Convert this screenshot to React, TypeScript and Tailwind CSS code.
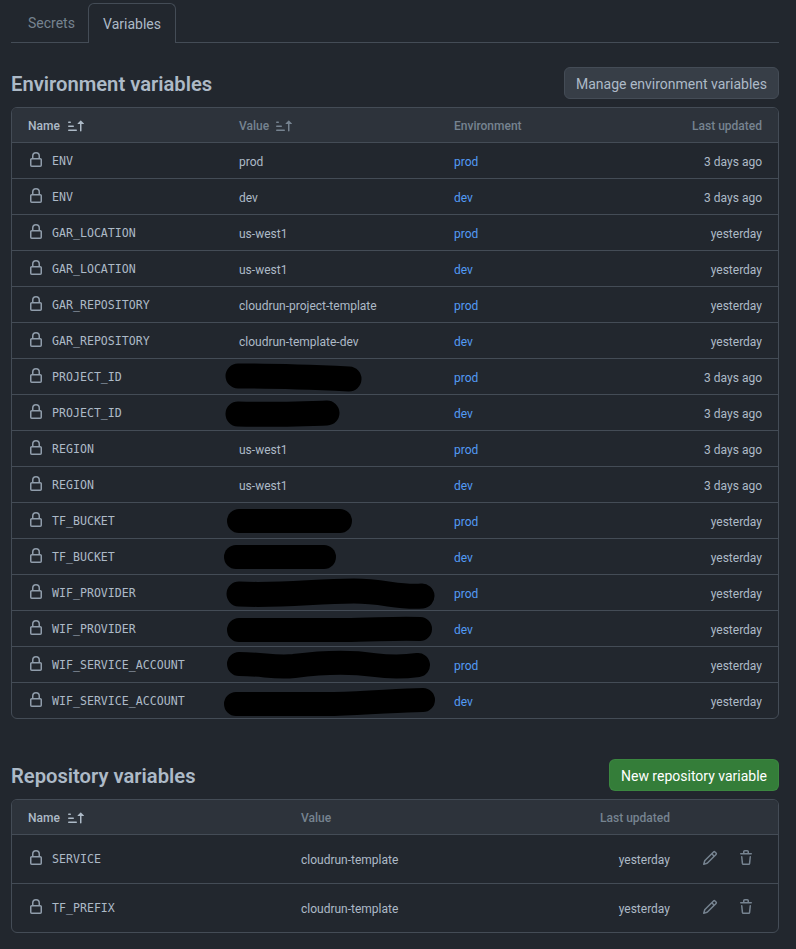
import React from "react";

const sans = "font-['Roboto',sans-serif]";

function Lock() {
  return (
    <svg viewBox="0 0 16 16" width="16" height="16" className="shrink-0 -translate-y-[1px] fill-[#909dab]">
      <path d="M4 4a4 4 0 0 1 8 0v2h.25c.966 0 1.75.784 1.75 1.75v5.5A1.75 1.75 0 0 1 12.25 15h-8.5A1.75 1.75 0 0 1 2 13.25v-5.5C2 6.784 2.784 6 3.75 6H4Zm8.25 3.5h-8.5a.25.25 0 0 0-.25.25v5.5c0 .138.112.25.25.25h8.5a.25.25 0 0 0 .25-.25v-5.5a.25.25 0 0 0-.25-.25ZM10.5 6V4a2.5 2.5 0 1 0-5 0v2Z" />
    </svg>
  );
}

function Sort({ dim }: { dim?: boolean }) {
  return (
    <svg viewBox="0 0 16 16" width="16" height="16" className={dim ? "fill-[#768390]" : "fill-[#adbac7]"}>
      <path d="m12.927 2.573 3 3A.25.25 0 0 1 15.75 6H13.5v6.75a.75.75 0 0 1-1.5 0V6H9.75a.25.25 0 0 1-.177-.427l3-3a.25.25 0 0 1 .354 0ZM0 12.25a.75.75 0 0 1 .75-.75h7.5a.75.75 0 0 1 0 1.5H.75a.75.75 0 0 1-.75-.75Zm0-4a.75.75 0 0 1 .75-.75h4.5a.75.75 0 0 1 0 1.5H.75A.75.75 0 0 1 0 8.25Zm0-4a.75.75 0 0 1 .75-.75h1.5a.75.75 0 0 1 0 1.5H.75A.75.75 0 0 1 0 4.25Z" />
    </svg>
  );
}

function Pencil() {
  return (
    <svg viewBox="0 0 16 16" width="16" height="16" className="fill-[#768390]">
      <path d="M11.013 1.427a1.75 1.75 0 0 1 2.474 0l1.086 1.086a1.75 1.75 0 0 1 0 2.474l-8.61 8.61c-.21.21-.47.364-.756.445l-3.251.93a.75.75 0 0 1-.927-.928l.929-3.25c.081-.286.235-.547.445-.758l8.61-8.61Zm.176 4.823L9.75 4.81l-6.286 6.287a.253.253 0 0 0-.064.108l-.558 1.953 1.953-.558a.253.253 0 0 0 .108-.064Zm1.238-3.763a.25.25 0 0 0-.354 0L10.811 3.75l1.439 1.44 1.263-1.263a.25.25 0 0 0 0-.354Z" />
    </svg>
  );
}

function Trash() {
  return (
    <svg viewBox="0 0 16 16" width="16" height="16" className="fill-[#768390]">
      <path d="M11 1.75V3h2.25a.75.75 0 0 1 0 1.5H2.75a.75.75 0 0 1 0-1.5H5V1.75C5 .784 5.784 0 6.75 0h2.5C10.216 0 11 .784 11 1.75ZM4.496 6.675l.66 6.6a.25.25 0 0 0 .249.225h5.19a.25.25 0 0 0 .249-.225l.66-6.6a.75.75 0 0 1 1.492.149l-.66 6.6A1.748 1.748 0 0 1 10.595 15h-5.19a1.75 1.75 0 0 1-1.741-1.575l-.66-6.6a.75.75 0 1 1 1.492-.15ZM6.5 1.75V3h3V1.75a.25.25 0 0 0-.25-.25h-2.5a.25.25 0 0 0-.25.25Z" />
    </svg>
  );
}

// Black marker strokes hiding values; coordinates are relative to the row (x from 224).
function Scribble({ d, w }: { d: string; w: number }) {
  return (
    <svg width="220" height="35" className="-ml-[15px] block overflow-visible" fill="none" stroke="#000" strokeWidth={w} strokeLinecap="round" strokeLinejoin="round">
      <path d={d} />
    </svg>
  );
}

type Row = { name: string; value?: string; scribble?: [string, number]; env: "prod" | "dev"; updated: string };

const rows: Row[] = [
  { name: "ENV", value: "prod", env: "prod", updated: "3 days ago" },
  { name: "ENV", value: "dev", env: "dev", updated: "3 days ago" },
  { name: "GAR_LOCATION", value: "us-west1", env: "prod", updated: "yesterday" },
  { name: "GAR_LOCATION", value: "us-west1", env: "dev", updated: "yesterday" },
  { name: "GAR_REPOSITORY", value: "cloudrun-project-template", env: "prod", updated: "yesterday" },
  { name: "GAR_REPOSITORY", value: "cloudrun-template-dev", env: "dev", updated: "yesterday" },
  { name: "PROJECT_ID", scribble: ["M14 17 C50 17 80 18 125 20", 25], env: "prod", updated: "3 days ago" },
  { name: "PROJECT_ID", scribble: ["M14 19 C40 20 70 19 103 18", 25], env: "dev", updated: "3 days ago" },
  { name: "REGION", value: "us-west1", env: "prod", updated: "3 days ago" },
  { name: "REGION", value: "us-west1", env: "dev", updated: "3 days ago" },
  { name: "TF_BUCKET", scribble: ["M15 18 L116 18", 24], env: "prod", updated: "yesterday" },
  { name: "TF_BUCKET", scribble: ["M12 18 L100 18", 24], env: "dev", updated: "yesterday" },
  { name: "WIF_PROVIDER", scribble: ["M15 19 C60 21 90 16 130 16 C160 16 175 23 198 21", 25], env: "prod", updated: "yesterday" },
  { name: "WIF_PROVIDER", scribble: ["M15 19 L120 19 C150 19 170 17 196 18", 24], env: "dev", updated: "yesterday" },
  { name: "WIF_SERVICE_ACCOUNT", scribble: ["M15 17 C40 17 50 21 70 19 C100 15 130 15 150 18 C165 20 180 20 194 18", 24], env: "prod", updated: "yesterday" },
  { name: "WIF_SERVICE_ACCOUNT", scribble: ["M12 21 L110 21 C150 20 175 17 199 17", 24], env: "dev", updated: "yesterday" },
];

const repoRows = [
  { name: "SERVICE", value: "cloudrun-template", updated: "yesterday" },
  { name: "TF_PREFIX", value: "cloudrun-template", updated: "yesterday" },
];

function NameCell({ name }: { name: string }) {
  return (
    <div className="flex items-center gap-[8px]">
      <Lock />
      <span className="translate-y-[1px] font-['DejaVu_Sans_Mono',monospace] text-[11.6px] text-[#adbac7]">{name}</span>
    </div>
  );
}

export default function App() {
  return (
    <div className={`min-h-[949px] bg-[#22272e] pl-[11px] pr-[17px] pt-[3px] text-[#adbac7] ${sans}`}>
      <div className="flex h-[40px] border-b border-[#444c56] text-sm">
        <div className="flex w-[77px] items-center pl-[17px] pt-[1px] text-[#768390]">Secrets</div>
        <div className="flex h-[40px] w-[88px] items-center justify-center rounded-t-md border border-b-0 border-[#444c56] bg-[#22272e] pt-[1px]">Variables</div>
      </div>

      <div className="mt-6 mb-2 flex h-8 items-center justify-between">
        <h2 className="pt-[2px] text-[20.2px] font-semibold leading-none text-[#adbac7]">Environment variables</h2>
        <div className="flex h-8 w-[215px] items-center justify-center rounded-md border border-[#444c56] bg-[#373e47] pt-[1px] text-sm">Manage environment variables</div>
      </div>

      <div className="overflow-hidden rounded-md border border-[#444c56] text-xs">
        <div className="grid h-[34px] grid-cols-[211px_215px_1fr_auto] items-center bg-[#2d333b] px-4 pt-[1px] font-medium text-[#768390]">
          <div className="flex items-center gap-[8px] text-[#adbac7]">Name <Sort /></div>
          <div className="flex items-center gap-[7px]">Value <Sort dim /></div>
          <div>Environment</div>
          <div>Last updated</div>
        </div>
        {rows.map((r, i) => (
          <div key={i} className="grid h-9 grid-cols-[211px_215px_1fr_auto] items-center border-t border-[#444c56] px-4">
            <NameCell name={r.name} />
            {r.scribble ? <Scribble d={r.scribble[0]} w={r.scribble[1]} /> : <div className="pt-[2px]">{r.value}</div>}
            <div className="pt-[2px] text-[#539bf5]">{r.env}</div>
            <div className="pt-[2px]">{r.updated}</div>
          </div>
        ))}
      </div>

      <div className="mt-10 mb-2 flex h-8 items-center justify-between">
        <h2 className="pt-[2px] text-[20.2px] font-semibold leading-none text-[#adbac7]">Repository variables</h2>
        <div className="flex h-8 w-[170px] items-center justify-center rounded-md border border-[#46954a66] bg-[#347d39] pt-[1px] text-sm text-white">New repository variable</div>
      </div>

      <div className="overflow-hidden rounded-md border border-[#444c56] text-xs">
        <div className="grid h-[34px] grid-cols-[273px_1fr_auto_108px] items-center bg-[#2d333b] pl-4 pt-[1px] font-medium text-[#768390]">
          <div className="flex items-center gap-[8px] text-[#adbac7]">Name <Sort /></div>
          <div>Value</div>
          <div>Last updated</div>
          <div />
        </div>
        {repoRows.map((r) => (
          <div key={r.name} className="grid h-[49px] grid-cols-[273px_1fr_auto_108px] items-center border-t border-[#444c56] pl-4">
            <NameCell name={r.name} />
            <div className="pt-[2px]">{r.value}</div>
            <div className="pt-[2px]">{r.updated}</div>
            <div className="flex -translate-y-[1px] items-center gap-[20px] pl-[32px]">
              <Pencil />
              <Trash />
            </div>
          </div>
        ))}
      </div>
    </div>
  );
}
